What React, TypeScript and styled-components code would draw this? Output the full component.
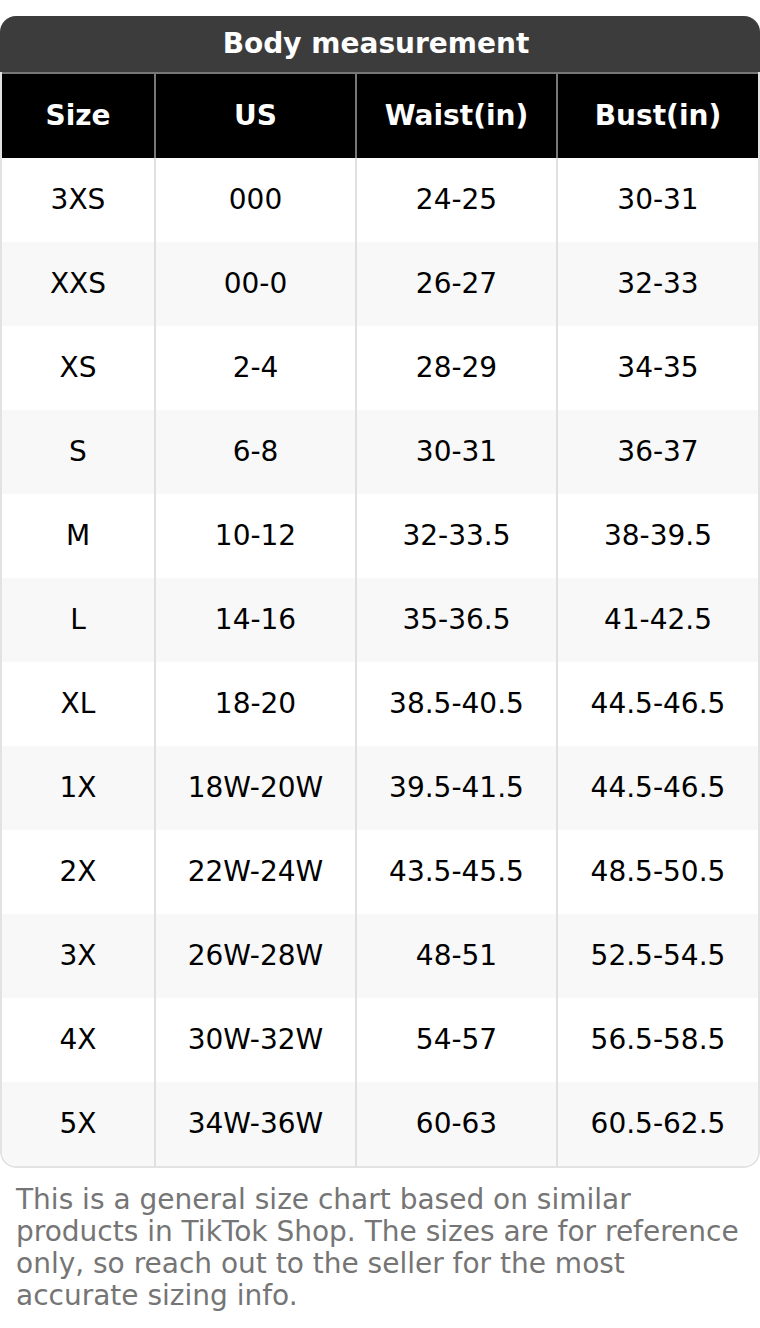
import styled, { createGlobalStyle } from 'styled-components';

const GlobalStyle = createGlobalStyle`
	body {
		margin: 0;
		background: #fff;
		font-family: 'DejaVu Sans', 'Noto Sans', sans-serif;
	}
`;

const rows: string[][] = [
	['3XS', '000', '24-25', '30-31'],
	['XXS', '00-0', '26-27', '32-33'],
	['XS', '2-4', '28-29', '34-35'],
	['S', '6-8', '30-31', '36-37'],
	['M', '10-12', '32-33.5', '38-39.5'],
	['L', '14-16', '35-36.5', '41-42.5'],
	['XL', '18-20', '38.5-40.5', '44.5-46.5'],
	['1X', '18W-20W', '39.5-41.5', '44.5-46.5'],
	['2X', '22W-24W', '43.5-45.5', '48.5-50.5'],
	['3X', '26W-28W', '48-51', '52.5-54.5'],
	['4X', '30W-32W', '54-57', '56.5-58.5'],
	['5X', '34W-36W', '60-63', '60.5-62.5'],
];

const headers = ['Size', 'US', 'Waist(in)', 'Bust(in)'];

const Page = styled.div`
	padding-top: 16px;
`;

const Card = styled.div`
	border-radius: 16px;
	overflow: hidden;
`;

const Title = styled.div`
	height: 56px;
	padding: 0 8px 2px 0;
	box-sizing: border-box;
	background: #3c3c3c;
	color: #fff;
	font-weight: 700;
	font-size: 28px;
	display: flex;
	align-items: center;
	justify-content: center;
`;

const Grid = styled.div`
	display: grid;
	grid-template-columns: 152px 201px 201px 1fr;
	border: 2px solid #e2e2e2;
	border-top: none;
	border-radius: 0 0 16px 16px;
	overflow: hidden;
`;

const HeadCell = styled.div<{ $first?: boolean }>`
	height: 86px;
	padding-bottom: 2px;
	box-sizing: border-box;
	background: #000;
	color: #fff;
	font-weight: 700;
	font-size: 28px;
	display: flex;
	align-items: center;
	justify-content: center;
	border-top: 2px solid #777;
	border-left: ${(p) => (p.$first ? 'none' : '2px solid #777')};
`;

const Cell = styled.div<{ $first?: boolean; $alt?: boolean }>`
	height: 84px;
	padding-bottom: 2px;
	box-sizing: border-box;
	background: ${(p) => (p.$alt ? '#f8f8f8' : '#fff')};
	color: #000;
	font-size: 28px;
	display: flex;
	align-items: center;
	justify-content: center;
	border-left: ${(p) => (p.$first ? 'none' : '2px solid #e0e0e0')};
`;

const Note = styled.p`
	margin: 0;
	padding: 16px 16px 0;
	font-size: 28px;
	line-height: 32px;
	color: #757575;
`;

const App = () => {
	return (
		<Page>
			<GlobalStyle />
			<Card>
				<Title>Body measurement</Title>
				<Grid>
					{headers.map((h, i) => (
						<HeadCell key={h} $first={i === 0}>
							{h}
						</HeadCell>
					))}
					{rows.map((row, r) =>
						row.map((v, i) => (
							<Cell key={r + '-' + i} $first={i === 0} $alt={r % 2 === 1}>
								{v}
							</Cell>
						))
					)}
				</Grid>
			</Card>
			<Note>
				This is a general size chart based on similar products in TikTok Shop. The sizes are for reference only, so
				reach out to the seller for the most accurate sizing info.
			</Note>
		</Page>
	);
};

export default App;
